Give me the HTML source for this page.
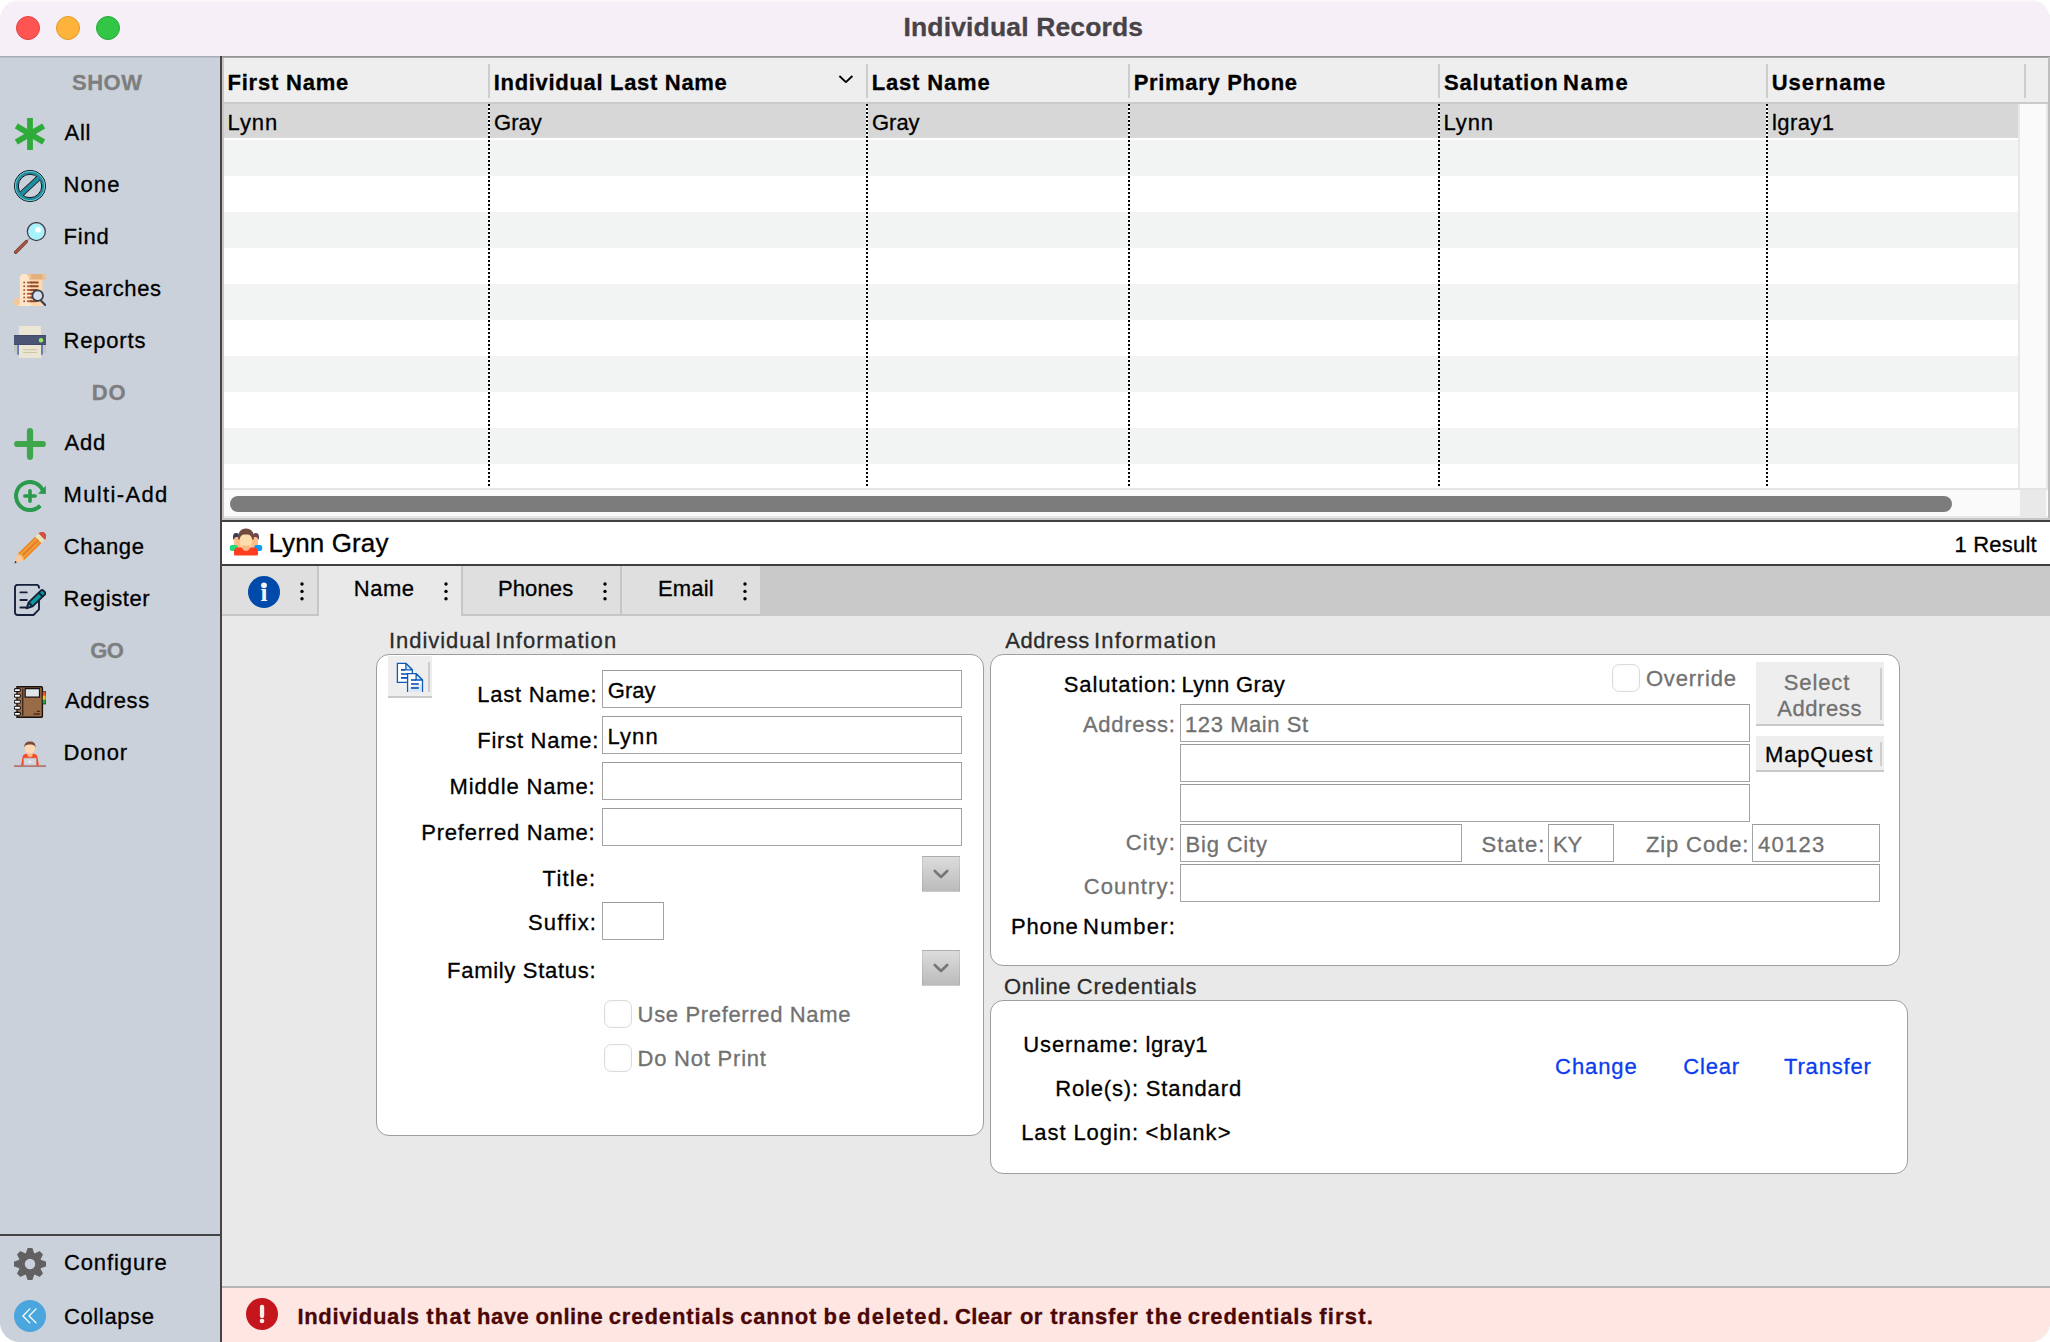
<!DOCTYPE html>
<html lang="en">
<head>
<meta charset="utf-8">
<title>Individual Records</title>
<style>
*{box-sizing:border-box;margin:0;padding:0}
html,body{width:2050px;height:1342px;overflow:hidden;background:#fff}
body{font-family:"Liberation Sans",sans-serif;font-size:22px;color:#000;position:relative}
#win{position:absolute;left:0;top:0;width:2050px;height:1342px;border-radius:20px;overflow:hidden;background:#e9e9e9}
.abs{position:absolute}
.t{position:absolute;white-space:nowrap;line-height:30px;height:30px;-webkit-text-stroke:.3px}
#titlebar{left:0;top:0;width:2050px;height:56px;background:#f6eff7;border-top:2px solid #faf6fa}
.tl{position:absolute;top:16px;width:24px;height:24px;border-radius:50%}
#sidebar{left:0;top:56px;width:220px;height:1286px;background:linear-gradient(#9fa5ae 0,#c3cad4 2px,#cad1db 2px)}
#divider{left:220px;top:56px;width:2px;height:1286px;background:#444}
.ic{position:absolute;left:14px;width:32px;height:32px}
.inp{position:absolute;background:#fff;border:1px solid #a4a4a4;border-top-color:#9a9a9a;height:38px}
.box{position:absolute;background:#fff;border:1px solid #9e9e9e;border-radius:13px}
.cb{position:absolute;width:28px;height:28px;border-radius:7px;background:#fff;border:1px solid #dcdcdc;box-shadow:inset 0 0 3px rgba(0,0,0,.05)}
.dd{position:absolute;width:38px;height:36px;background:linear-gradient(#dcdcdc,#bbbbbb);border:1px solid rgba(0,0,0,.07)}
.btn{position:absolute;background:#eeeeee;border-bottom:2px solid #c9c9c9}
</style>
</head>
<body>
<div id="win">
<div id="titlebar" class="abs"></div>
<div class="tl" style="left:16px;background:#fe5552;border:1px solid #e3413d"></div>
<div class="tl" style="left:56px;background:#feb43a;border:1px solid #e19a2c"></div>
<div class="tl" style="left:96px;background:#32c546;border:1px solid #25aa38"></div>

<div id="sidebar" class="abs"></div>
<div id="divider" class="abs"></div>
<!--SIDEBAR-->
<svg class="ic" style="top:118px" viewBox="0 0 32 32"><g stroke="#2eab38" stroke-width="5.800" stroke-linecap="butt"><path d="M16 0V32"/><path d="M2.300 8.100L29.700 23.900"/><path d="M2.300 23.900L29.700 8.100"/></g></svg>

<svg class="ic" style="top:170px" viewBox="0 0 32 32"><circle cx="16" cy="16" r="13.800" fill="none" stroke="#1b8fa1" stroke-width="3.800"/><circle cx="16" cy="16" r="15.600" fill="none" stroke="#0a1418" stroke-width="1"/><circle cx="16" cy="16" r="14.800" fill="none" stroke="#a4ecee" stroke-width=".7"/><circle cx="16" cy="16" r="11.700" fill="none" stroke="#0a1418" stroke-width="1"/><g transform="rotate(-43 16 16)"><rect x="4.300" y="13.900" width="23.400" height="4.200" fill="#1b8fa1"/><path d="M5 13.600H27M5 18.400H27" stroke="#0a1418" stroke-width="1"/></g></svg>

<svg class="ic" style="top:222px" viewBox="0 0 32 32"><path d="M12.800 19.100L15.400 16.500" stroke="#9aa0aa" stroke-width="1.200"/><path d="M1.700 30.200L12.300 19.600" stroke="#7b3f3a" stroke-width="3.400" stroke-linecap="round"/><path d="M1.900 30L12.100 19.800" stroke="#a8553d" stroke-width="1.800" stroke-linecap="round"/><circle cx="22.350" cy="9.550" r="9" fill="#a7f2fb" stroke="#463a4b" stroke-width="1.300"/><circle cx="24.200" cy="7.800" r="3.300" fill="#fff" opacity=".55"/><circle cx="24.200" cy="7.800" r="2.400" fill="#fff"/></svg>

<svg class="ic" style="top:274px" viewBox="0 0 32 32"><path d="M0 27.500a3.300 3.300 0 0 1 3.300-3.300H8V32H3.300A3.300 3.300 0 0 1 0 28.700z" fill="#f5c896"/><path d="M5.800 4a4 4 0 0 1 4-4H17V32H3.500c1.500-.5 2.300-1.500 2.300-3.500z" fill="#ffe6c8"/><path d="M17 0h11.400V32H17z" fill="#ffd7a8"/><path d="M12 0h17.200a2.800 2.800 0 0 1 0 5.600H15V4a4 4 0 0 0-3-4z" fill="#e2b07e"/><path d="M12 0h5v5.600h-2V4a4 4 0 0 0-3-4z" fill="#f2c696"/><path d="M28.400 0h.8a2.800 2.800 0 0 1 0 5.600h-.8z" fill="#f0c08a"/><g stroke="#b3623f" stroke-width="2" stroke-linecap="round"><path d="M13.800 8.400H17M13.800 12.200H17M13.800 16H17M13.800 19.700H17M13.800 23.500H17M13.800 27.300H17"/></g><g stroke="#8e4a30" stroke-width="2" stroke-linecap="round"><path d="M17 8.400H23.800M17 12.200H23.800M17 16H23M17 19.700H20M17 23.500H20M17 27.300H22"/></g><g fill="#a85a3a"><circle cx="10.200" cy="8.400" r="1"/><circle cx="10.200" cy="12.200" r="1"/><circle cx="10.200" cy="16" r="1"/><circle cx="10.200" cy="19.700" r="1"/><circle cx="10.200" cy="23.500" r="1"/><circle cx="10.200" cy="27.300" r="1"/></g><path d="M27.300 27L31.500 31.200" stroke="#3a3f4a" stroke-width="2.200" stroke-linecap="round"/><circle cx="23.700" cy="21.700" r="5.300" fill="#d5dff0" stroke="#3a3f4a" stroke-width="1.800"/></svg>

<svg class="ic" style="top:326px" viewBox="0 0 32 32"><path d="M5 0h22v10H5z" fill="#ebe6d3"/><path d="M0 18.900h3v7.900H0zM29 18.900h3v7.900h-3z" fill="#c4c6c0"/><path d="M3.200 18.900H5v9.900H3.200zM27 18.900h1.900v9.900H27z" fill="#6878b5"/><path d="M5 18.500h22V32H5z" fill="#ebe6d3"/><path d="M0 9.100h32v9.800H0z" fill="#4a5575"/><path d="M0 9.100h32v1H0zM0 18h32v.9H0z" fill="#3f4a6c"/><circle cx="27" cy="14.300" r="2.200" fill="#98e860"/><path d="M9.100 23.700H22.900M9.100 26.500H22.900" stroke="#cfc5a5" stroke-width="1"/></svg>

<svg class="ic" style="top:428px" viewBox="0 0 32 32"><path d="M16 3.200V28.800M3.200 16H28.800" stroke="#40a64b" stroke-width="6.200" stroke-linecap="round"/></svg>

<svg class="ic" style="top:480px" viewBox="0 0 32 32"><path d="M28.700 10.100A14 14 0 1 0 26.200 25.600" fill="none" stroke="#2a9a4c" stroke-width="4"/><path d="M31.800 5.800L31.900 13.900L24 13.700Z" fill="#2a9a4c"/><path d="M16 10.800V21.200M10.800 16H21.200" stroke="#2a9a4c" stroke-width="3.600" stroke-linecap="round"/></svg>

<svg class="ic" style="top:532px" viewBox="0 0 32 32"><g transform="translate(-.6 .6) rotate(45.500 16 16)"><path d="M11.500 -1v-.5a4.500 4.500 0 0 1 9 0V-1z" fill="#d35045"/><path d="M11.500 -1h9v4.500h-9z" fill="#f5efb5"/><path d="M11.500 .3h9M11.500 2h9" stroke="#cbd0cf" stroke-width=".8"/><path d="M11.500 3.500h9V28l-4.500 -1.500-4.500 1.500z" fill="#f08326"/><path d="M13.500 3.500h5V27.200l-2.500-.8-2.500.8z" fill="#ea8129"/><path d="M13.500 3.500h1V27.400l-1 .4zM17.500 3.500h1V27.800l-1-.4z" fill="#eab949"/><path d="M11.500 27.200l4.500-1.500 4.500 1.500-4.500 9.800z" fill="#ffc896"/><path d="M11.500 27.200l4.500-1.500 4.500 1.500v1l-4.500-1.500-4.500 1.500z" fill="#e8ae2a"/><path d="M14.900 34.600h2.200L16 37.200z" fill="#2a2f3a"/></g></svg>

<svg class="ic" style="top:584px" viewBox="0 0 32 32"><path d="M25 4.500V3.400a2.500 2.500 0 0 0-2.500-2.500h-19a2.500 2.500 0 0 0-2.500 2.500v25.100a2.500 2.500 0 0 0 2.500 2.500h16L25 25.300V15" fill="none" stroke="#16203a" stroke-width="1.900" stroke-linejoin="round"/><path d="M6.400 8.400h6.400M6.400 16h6.400M6.400 23.500h5.500" stroke="#16203a" stroke-width="1.900" stroke-linecap="round"/><g transform="translate(12.600 24.300) rotate(-44)"><path d="M0 0L5.600 -2.800H22.500a1.800 1.800 0 0 1 1.800 1.800V1a1.800 1.800 0 0 1-1.800 1.800H5.600z" fill="#0b9a9b" stroke="#16203a" stroke-width="1.900" stroke-linejoin="round"/><path d="M5.600 -2.800V2.800M19.600 -2.800V2.800" stroke="#16203a" stroke-width="1.900"/></g></svg>

<svg class="ic" style="top:686px" viewBox="0 0 32 32"><path d="M3 .7h24.400a1 1 0 0 1 1 1v28.600a1 1 0 0 1-1 1H3z" fill="#9a6b47" stroke="#17110f" stroke-width="1.400"/><path d="M8.800 2.500v27" stroke="#17110f" stroke-width="1"/><path d="M11.200 2.700h14.300v8.500H11.200z" fill="#e0e6e8" stroke="#17110f" stroke-width="1.200"/><path d="M28.400 5.600h3.600v4.200h-3.600z" fill="#e8562a"/><path d="M28.400 9.800h3.600v4h-3.600z" fill="#f0c030"/><path d="M28.400 13.800h3.600v4.200h-3.600z" fill="#2aa040"/><path d="M28.400 5.600h3.600v12.400h-3.600z" fill="none" stroke="#17110f" stroke-width=".6"/><g fill="#fff" stroke="#17110f" stroke-width="1.100"><rect x=".2" y="2.600" width="6.300" height="2.900" rx="1.450"/><rect x=".2" y="8.300" width="6.300" height="2.900" rx="1.450"/><rect x=".2" y="14.300" width="6.300" height="2.900" rx="1.450"/><rect x=".2" y="20.300" width="6.300" height="2.900" rx="1.450"/><rect x=".2" y="26.400" width="6.300" height="2.900" rx="1.450"/></g><path d="M23 25.300h2.800M19.500 28h6.300" stroke="#17110f" stroke-width="1.100"/></svg>

<svg class="ic" style="top:738px" viewBox="0 0 32 32"><path d="M0 28.100h32" stroke="#b07a75" stroke-width="1.900"/><path d="M7 27.200l1.500-8c.5-2.500 2.500-3.600 7.500-3.600s7 1.100 7.500 3.600l1.500 8z" fill="#f54a28"/><path d="M13.300 13h5.400v3.200a2.700 2.700 0 0 1-5.400 0z" fill="#ffb98a"/><path d="M10.700 8.700c0-3.600 2-5.300 5.300-5.300s5.300 1.700 5.300 5.300c0 4-2.300 6.900-5.300 6.900s-5.300-2.900-5.300-6.900z" fill="#fdd9b5"/><path d="M10.600 9.600c-.6-4.600 1.800-6.200 5.400-6.200s6 1.600 5.400 6.200c-.6-2.300-1.300-3.200-5.400-3.200s-4.800.9-5.400 3.200z" fill="#7a4a3a"/><path d="M9.900 20.200h12.200v6.800H9.900z" fill="#cfd8e0"/><path d="M9.900 20.200h12.200v6.800H9.900z" fill="none" stroke="#b9c4ce" stroke-width=".6"/><rect x="15.200" y="23" width="1.600" height="1.600" fill="#fff"/></svg>

<div class="abs" style="left:0;top:1234px;width:220px;height:2px;background:#444"></div>

<svg class="ic" style="top:1248px" viewBox="0 0 32 32"><g fill="#616161"><circle cx="16" cy="16" r="11.300"/><path d="M11.600 6L13.500 .3a.4 .4 0 0 1 .4-.3h4.200a.4 .4 0 0 1 .4 .3L20.400 6z"/><path transform="rotate(45 16 16)" d="M11.600 6L13.500 .3a.4 .4 0 0 1 .4-.3h4.200a.4 .4 0 0 1 .4 .3L20.400 6z"/><path transform="rotate(90 16 16)" d="M11.600 6L13.500 .3a.4 .4 0 0 1 .4-.3h4.200a.4 .4 0 0 1 .4 .3L20.400 6z"/><path transform="rotate(135 16 16)" d="M11.600 6L13.500 .3a.4 .4 0 0 1 .4-.3h4.200a.4 .4 0 0 1 .4 .3L20.400 6z"/><path transform="rotate(180 16 16)" d="M11.600 6L13.500 .3a.4 .4 0 0 1 .4-.3h4.200a.4 .4 0 0 1 .4 .3L20.400 6z"/><path transform="rotate(225 16 16)" d="M11.600 6L13.500 .3a.4 .4 0 0 1 .4-.3h4.200a.4 .4 0 0 1 .4 .3L20.400 6z"/><path transform="rotate(270 16 16)" d="M11.600 6L13.500 .3a.4 .4 0 0 1 .4-.3h4.200a.4 .4 0 0 1 .4 .3L20.400 6z"/><path transform="rotate(315 16 16)" d="M11.600 6L13.500 .3a.4 .4 0 0 1 .4-.3h4.200a.4 .4 0 0 1 .4 .3L20.400 6z"/></g><circle cx="16" cy="16" r="5.250" fill="#cad1dc"/></svg>

<svg class="ic" style="top:1300px" viewBox="0 0 32 32"><circle cx="16" cy="16" r="16" fill="#4ba6dd"/><path d="M15.800 8.900L8.950 16l6.850 6.900M22.070 8.900L15.060 16l7 6.900" fill="none" stroke="#fff" stroke-width="1.300" stroke-linecap="round" stroke-linejoin="round"/></svg>
<!--/SIDEBAR-->
<!--TABLE-->
<div class="abs" style="left:222px;top:56px;width:1828px;height:466px;background:#fff"></div>
<div class="abs" style="left:222px;top:56px;width:1828px;height:2px;background:linear-gradient(#8c8c8c,#b0b0b0)"></div>
<div class="abs" style="left:222px;top:58px;width:2px;height:462px;background:#c6c6c6"></div>
<div class="abs" style="left:2048px;top:57px;width:2px;height:463px;background:#bebebe"></div>
<div class="abs" style="left:224px;top:58px;width:1824px;height:44px;background:#eeeeee"></div>
<div class="abs" style="left:224px;top:102px;width:1824px;height:2px;background:linear-gradient(#c6c6c6,#cdcdcd)"></div>
<div class="abs" style="left:488px;top:64px;width:2px;height:34px;background:#cdcdcd"></div>
<div class="abs" style="left:866px;top:64px;width:2px;height:34px;background:#cdcdcd"></div>
<div class="abs" style="left:1128px;top:64px;width:2px;height:34px;background:#cdcdcd"></div>
<div class="abs" style="left:1438px;top:64px;width:2px;height:34px;background:#cdcdcd"></div>
<div class="abs" style="left:1766px;top:64px;width:2px;height:34px;background:#cdcdcd"></div>
<div class="abs" style="left:2024px;top:64px;width:2px;height:34px;background:#cdcdcd"></div>
<svg class="abs" style="left:837px;top:73px" width="18" height="12" viewBox="0 0 18 12"><path d="M2.400 3L8.900 9.100L15.400 3" fill="none" stroke="#000" stroke-width="1.900" stroke-linecap="butt" stroke-linejoin="round"/></svg>
<div class="abs" style="left:224px;top:104px;width:1794px;height:34px;background:#d7d7d7"></div>
<div class="abs" style="left:224px;top:140px;width:1794px;height:36px;background:#f2f3f3"></div>
<div class="abs" style="left:224px;top:212px;width:1794px;height:36px;background:#f2f3f3"></div>
<div class="abs" style="left:224px;top:284px;width:1794px;height:36px;background:#f2f3f3"></div>
<div class="abs" style="left:224px;top:356px;width:1794px;height:36px;background:#f2f3f3"></div>
<div class="abs" style="left:224px;top:428px;width:1794px;height:36px;background:#f2f3f3"></div>
<div class="abs" style="left:488px;top:104px;width:2px;height:384px;background:repeating-linear-gradient(#000 0,#000 2px,#fff 2px,#fff 4px)"></div>
<div class="abs" style="left:866px;top:104px;width:2px;height:384px;background:repeating-linear-gradient(#000 0,#000 2px,#fff 2px,#fff 4px)"></div>
<div class="abs" style="left:1128px;top:104px;width:2px;height:384px;background:repeating-linear-gradient(#000 0,#000 2px,#fff 2px,#fff 4px)"></div>
<div class="abs" style="left:1438px;top:104px;width:2px;height:384px;background:repeating-linear-gradient(#000 0,#000 2px,#fff 2px,#fff 4px)"></div>
<div class="abs" style="left:1766px;top:104px;width:2px;height:384px;background:repeating-linear-gradient(#000 0,#000 2px,#fff 2px,#fff 4px)"></div>
<div class="abs" style="left:2018px;top:104px;width:30px;height:384px;background:#fafafa;border-left:2px solid #e8e8e8;border-right:2px solid #e8e8e8"></div>
<div class="abs" style="left:224px;top:488px;width:1824px;height:30px;background:#fafafa;border-top:2px solid #e4e4e4;border-bottom:2px solid #e9e9e9"></div>
<div class="abs" style="left:2020px;top:490px;width:26px;height:26px;background:#e9e9e9"></div>
<div class="abs" style="left:230px;top:496px;width:1722px;height:16px;border-radius:8px;background:#7c7c7c"></div>
<div class="abs" style="left:222px;top:518px;width:1828px;height:2px;background:#c6c6c6"></div>
<div class="abs" style="left:222px;top:520px;width:1828px;height:2px;background:#404040"></div>
<div class="abs" style="left:222px;top:522px;width:1828px;height:42px;background:#fff"></div>
<div class="abs" style="left:222px;top:564px;width:1828px;height:2px;background:#404040"></div>
<!--/TABLE-->
<!--DETAIL-->
<svg class="abs" style="left:229px;top:527px" width="34" height="30" viewBox="-1 -1 34 30"><path d="M3.200 11.500c-.8-4 .3-6.500 2.800-6.500s3 1 3 3v4z" fill="#3b3f5c"/><path d="M28.800 11.500c.8-4-.3-6.500-2.800-6.500s-3 1-3 3v4z" fill="#6a4a50"/><rect x="4.100" y="8.900" width="7.500" height="11" rx="2.500" fill="#ffbe85"/><rect x="20.400" y="8.900" width="7.500" height="11" rx="2.500" fill="#ffbe85"/><rect x="-.2" y="17" width="8" height="6" rx="2.200" fill="#1ede7c"/><rect x="24.200" y="17" width="8" height="6" rx="2.200" fill="#0a9cff"/><path d="M8.200 11.500C7.400 4.500 10.500.4 16 .4s8.600 4.100 7.800 11.100z" fill="#724a40"/><rect x="9.800" y="6.600" width="12.200" height="12.200" rx="4.500" fill="#ffdcab"/><path d="M12 17.500h8v3a4 4 0 0 1-8 0z" fill="#ffb985"/><path d="M4 23.500c0-2.500 1.500-3.900 4-3.900h4c.5 2 2 3.500 4 3.500s3.500-1.500 4-3.500h4c2.500 0 4 1.400 4 3.900v2.400c0 1-.6 1.500-1.500 1.500h-21c-.9 0-1.500-.5-1.500-1.500z" fill="#ff3d1f"/></svg>

<div class="abs" style="left:222px;top:566px;width:1828px;height:50px;background:#c9c9c9"></div>
<div class="abs" style="left:222px;top:566px;width:97px;height:50px;background:#dfdfdf;border-right:2px solid #c6c6c6;border-bottom:2px solid #c6c6c6"></div>
<div class="abs" style="left:319px;top:566px;width:142px;height:50px;background:#e9e9e9"></div>
<div class="abs" style="left:461px;top:566px;width:160px;height:50px;background:#dfdfdf;border-left:2px solid #c6c6c6;border-bottom:2px solid #c6c6c6"></div>
<div class="abs" style="left:620px;top:566px;width:140px;height:50px;background:#dfdfdf;border-left:2px solid #c6c6c6;border-bottom:2px solid #c6c6c6"></div>
<svg class="abs" style="left:248px;top:576px" width="32" height="32" viewBox="0 0 32 32"><circle cx="16" cy="16" r="16" fill="#004aac"/><circle cx="16" cy="9.300" r="2.900" fill="#f4f4f4"/><text x="16" y="25.200" text-anchor="middle" font-family="Liberation Serif,serif" font-weight="bold" font-size="25" fill="#f4f4f4">i</text></svg>
<svg class="abs" style="left:298px;top:580px" width="8" height="24" viewBox="0 0 8 24"><circle cx="4" cy="4" r="1.700"/><circle cx="4" cy="11.400" r="1.700"/><circle cx="4" cy="18.700" r="1.700"/></svg>
<svg class="abs" style="left:442px;top:580px" width="8" height="24" viewBox="0 0 8 24"><circle cx="4" cy="4" r="1.700"/><circle cx="4" cy="11.400" r="1.700"/><circle cx="4" cy="18.700" r="1.700"/></svg>
<svg class="abs" style="left:601px;top:580px" width="8" height="24" viewBox="0 0 8 24"><circle cx="4" cy="4" r="1.700"/><circle cx="4" cy="11.400" r="1.700"/><circle cx="4" cy="18.700" r="1.700"/></svg>
<svg class="abs" style="left:741px;top:580px" width="8" height="24" viewBox="0 0 8 24"><circle cx="4" cy="4" r="1.700"/><circle cx="4" cy="11.400" r="1.700"/><circle cx="4" cy="18.700" r="1.700"/></svg>

<div class="box" style="left:376px;top:654px;width:608px;height:482px"></div>
<div class="btn" style="left:388px;top:656px;width:44px;height:42px"></div>
<div class="abs" style="left:428px;top:662px;width:2px;height:30px;background:#cdcdcd"></div>
<svg class="abs" style="left:396px;top:662px" width="28" height="30" viewBox="0 0 28 30"><path d="M1.400 1.400h8.500l6.400 6.400V20.300H1.400z" fill="#fff" stroke="#0a5cb8" stroke-width="1.300"/><path d="M9.900 1.400V7.800h6.400z" fill="#d4e5f9" stroke="#0a5cb8" stroke-width="1.300" stroke-linejoin="round"/><path d="M5 7.900h4.500M5 12h6M5 15.900h6" stroke="#0050b8" stroke-width="1.700"/><path d="M11.600 30V11.600h8.500l6.400 6.400V30" fill="#fff"/><path d="M13 30l.3-5 12.300-3V30z" fill="#d9e8fb"/><path d="M11.600 30V11.600h8.500l6.400 6.400V30" fill="none" stroke="#0a5cb8" stroke-width="1.300"/><path d="M20.100 11.600V18h6.400z" fill="#d4e5f9" stroke="#0a5cb8" stroke-width="1.300" stroke-linejoin="round"/><path d="M15 18h5M15 22h7.800M15 26h7.800" stroke="#0046ac" stroke-width="1.700"/></svg>

<div class="inp" style="left:602px;top:670px;width:360px"></div>
<div class="inp" style="left:602px;top:716px;width:360px"></div>
<div class="inp" style="left:602px;top:762px;width:360px"></div>
<div class="inp" style="left:602px;top:808px;width:360px"></div>
<div class="inp" style="left:602px;top:902px;width:62px"></div>
<div class="dd" style="left:922px;top:856px"></div>
<div class="dd" style="left:922px;top:950px"></div>
<svg class="abs" style="left:932px;top:868px" width="18" height="12" viewBox="0 0 18 12"><path d="M2.800 3l6.200 6 6.200-6" fill="none" stroke="#767676" stroke-width="2.600" stroke-linecap="round" stroke-linejoin="round"/></svg>
<svg class="abs" style="left:932px;top:962px" width="18" height="12" viewBox="0 0 18 12"><path d="M2.800 3l6.200 6 6.200-6" fill="none" stroke="#767676" stroke-width="2.600" stroke-linecap="round" stroke-linejoin="round"/></svg>
<div class="cb" style="left:604px;top:1000px"></div>
<div class="cb" style="left:604px;top:1044px"></div>

<div class="box" style="left:990px;top:654px;width:910px;height:312px"></div>
<div class="inp" style="left:1180px;top:704px;width:570px"></div>
<div class="inp" style="left:1180px;top:744px;width:570px"></div>
<div class="inp" style="left:1180px;top:784px;width:570px"></div>
<div class="inp" style="left:1180px;top:824px;width:282px"></div>
<div class="inp" style="left:1548px;top:824px;width:66px"></div>
<div class="inp" style="left:1752px;top:824px;width:128px"></div>
<div class="inp" style="left:1180px;top:864px;width:700px"></div>
<div class="cb" style="left:1612px;top:664px"></div>
<div class="btn" style="left:1756px;top:662px;width:128px;height:64px"></div>
<div class="abs" style="left:1880px;top:668px;width:2px;height:52px;background:#cfcfcf"></div>
<div class="btn" style="left:1756px;top:736px;width:128px;height:36px"></div>
<div class="abs" style="left:1880px;top:742px;width:2px;height:24px;background:#cfcfcf"></div>

<div class="box" style="left:990px;top:1000px;width:918px;height:174px"></div>

<div class="abs" style="left:222px;top:1286px;width:1828px;height:2px;background:#b4b4b4"></div>
<div class="abs" style="left:222px;top:1288px;width:1828px;height:54px;background:#fee6e2"></div>
<svg class="abs" style="left:246px;top:1298px" width="32" height="32" viewBox="0 0 32 32"><circle cx="16" cy="16" r="16" fill="#c4161c"/><rect x="13.900" y="6.800" width="4.300" height="13.400" rx="2.100" fill="#fdeceb"/><circle cx="16" cy="23" r="2.300" fill="#fdeceb"/></svg>
<!--/DETAIL-->
<div class="t" id="t0" style="left:903.53px;top:12px;font-size:26.5px;font-weight:bold;color:#474347;letter-spacing:0.146px;">Individual Records</div>
<div class="t" id="t1" style="left:71.97px;top:68px;font-weight:bold;color:#7e7e7e;letter-spacing:0.501px;">SHOW</div>
<div class="t" id="t2" style="left:64.56px;top:118px;letter-spacing:0.681px;">All</div>
<div class="t" id="t3" style="left:63.50px;top:170px;letter-spacing:1.096px;">None</div>
<div class="t" id="t4" style="left:63.50px;top:222px;letter-spacing:0.809px;">Find</div>
<div class="t" id="t5" style="left:63.80px;top:274px;letter-spacing:0.606px;">Searches</div>
<div class="t" id="t6" style="left:63.50px;top:326px;letter-spacing:0.809px;">Reports</div>
<div class="t" id="t7" style="left:91.73px;top:378px;font-weight:bold;color:#7e7e7e;letter-spacing:0.896px;">DO</div>
<div class="t" id="t8" style="left:64.56px;top:428px;letter-spacing:0.802px;">Add</div>
<div class="t" id="t9" style="left:63.50px;top:480px;letter-spacing:1.350px;">Multi-Add</div>
<div class="t" id="t10" style="left:63.68px;top:532px;letter-spacing:0.643px;">Change</div>
<div class="t" id="t11" style="left:63.50px;top:584px;letter-spacing:0.607px;">Register</div>
<div class="t" id="t12" style="left:90.30px;top:636px;font-weight:bold;color:#7e7e7e;letter-spacing:-0.708px;">GO</div>
<div class="t" id="t13" style="left:64.96px;top:686px;letter-spacing:0.587px;">Address</div>
<div class="t" id="t14" style="left:63.50px;top:738px;letter-spacing:0.937px;">Donor</div>
<div class="t" id="t15" style="left:63.88px;top:1248px;letter-spacing:0.926px;">Configure</div>
<div class="t" id="t16" style="left:63.88px;top:1302px;letter-spacing:0.655px;">Collapse</div>
<div class="t" id="t17" style="left:227.43px;top:68px;font-weight:bold;letter-spacing:0.801px;">First Name</div>
<div class="t" id="t18" style="left:493.73px;top:68px;font-weight:bold;letter-spacing:0.687px;">Individual Last Name</div>
<div class="t" id="t19" style="left:871.63px;top:68px;font-weight:bold;letter-spacing:0.855px;">Last Name</div>
<div class="t" id="t20" style="left:1133.73px;top:68px;font-weight:bold;letter-spacing:0.670px;">Primary Phone</div>
<div class="t" id="t23" style="left:1771.68px;top:68px;font-weight:bold;letter-spacing:1.040px;">Username</div>
<div class="t" id="t24" style="left:227.60px;top:108px;letter-spacing:0.914px;">Lynn</div>
<div class="t" id="t25" style="left:494.09px;top:108px;letter-spacing:-0.013px;">Gray</div>
<div class="t" id="t26" style="left:871.99px;top:108px;letter-spacing:-0.013px;">Gray</div>
<div class="t" id="t27" style="left:1443.40px;top:108px;letter-spacing:0.914px;">Lynn</div>
<div class="t" id="t28" style="left:1772.02px;top:108px;letter-spacing:0.387px;">lgray1</div>
<div class="t" id="t29" style="left:268.47px;top:528px;font-size:26px;letter-spacing:0.125px;">Lynn Gray</div>
<div class="t" id="t30" style="left:1954.42px;top:530px;letter-spacing:0.231px;">1 Result</div>
<div class="t" id="t31" style="left:353.80px;top:574px;letter-spacing:0.498px;">Name</div>
<div class="t" id="t32" style="left:497.90px;top:574px;letter-spacing:0.135px;">Phones</div>
<div class="t" id="t33" style="left:657.90px;top:574px;letter-spacing:0.190px;">Email</div>
<div class="t" id="t36" style="left:477.30px;top:680px;letter-spacing:0.746px;">Last Name:</div>
<div class="t" id="t37" style="left:477.30px;top:726px;letter-spacing:0.733px;">First Name:</div>
<div class="t" id="t38" style="left:449.60px;top:772px;letter-spacing:0.854px;">Middle Name:</div>
<div class="t" id="t39" style="left:421.30px;top:818px;letter-spacing:0.771px;">Preferred Name:</div>
<div class="t" id="t40" style="left:542.61px;top:864px;letter-spacing:1.149px;">Title:</div>
<div class="t" id="t41" style="left:527.90px;top:908px;letter-spacing:1.226px;">Suffix:</div>
<div class="t" id="t42" style="left:447.10px;top:956px;letter-spacing:0.695px;">Family Status:</div>
<div class="t" id="t43" style="left:607.69px;top:676px;letter-spacing:0.087px;">Gray</div>
<div class="t" id="t44" style="left:607.50px;top:722px;letter-spacing:1.081px;">Lynn</div>
<div class="t" id="t45" style="left:637.60px;top:1000px;color:#717171;letter-spacing:0.654px;">Use Preferred Name</div>
<div class="t" id="t46" style="left:637.50px;top:1044px;color:#717171;letter-spacing:0.785px;">Do Not Print</div>
<div class="t" id="t49" style="left:1063.80px;top:670px;letter-spacing:0.844px;">Salutation:</div>
<div class="t" id="t50" style="left:1181.40px;top:670px;letter-spacing:0.345px;">Lynn Gray</div>
<div class="t" id="t51" style="left:1082.96px;top:710px;color:#717171;letter-spacing:0.718px;">Address:</div>
<div class="t" id="t52" style="left:1185.02px;top:710px;color:#717171;letter-spacing:0.573px;">123 Main St</div>
<div class="t" id="t53" style="left:1125.68px;top:828px;color:#717171;letter-spacing:1.281px;">City:</div>
<div class="t" id="t54" style="left:1185.50px;top:830px;color:#717171;letter-spacing:0.807px;">Big City</div>
<div class="t" id="t55" style="left:1481.60px;top:830px;color:#717171;letter-spacing:1.045px;">State:</div>
<div class="t" id="t56" style="left:1553.00px;top:830px;color:#717171;letter-spacing:-0.071px;">KY</div>
<div class="t" id="t57" style="left:1645.90px;top:830px;color:#717171;letter-spacing:0.890px;">Zip Code:</div>
<div class="t" id="t58" style="left:1758.00px;top:830px;color:#717171;letter-spacing:1.271px;">40123</div>
<div class="t" id="t59" style="left:1083.68px;top:872px;color:#717171;letter-spacing:1.139px;">Country:</div>
<div class="t" id="t62" style="left:1645.96px;top:664px;color:#717171;letter-spacing:0.809px;">Override</div>
<div class="t" id="t63" style="left:1783.80px;top:668px;color:#717171;letter-spacing:0.881px;">Select</div>
<div class="t" id="t64" style="left:1777.16px;top:694px;color:#717171;letter-spacing:0.587px;">Address</div>
<div class="t" id="t65" style="left:1765.00px;top:740px;letter-spacing:0.838px;">MapQuest</div>
<div class="t" id="t68" style="left:1023.30px;top:1030px;letter-spacing:0.889px;">Username:</div>
<div class="t" id="t69" style="left:1055.30px;top:1074px;letter-spacing:0.814px;">Role(s):</div>
<div class="t" id="t70" style="left:1021.20px;top:1118px;letter-spacing:0.917px;">Last Login:</div>
<div class="t" id="t71" style="left:1145.62px;top:1030px;letter-spacing:0.407px;">lgray1</div>
<div class="t" id="t72" style="left:1145.70px;top:1074px;letter-spacing:0.889px;">Standard</div>
<div class="t" id="t73" style="left:1145.62px;top:1118px;letter-spacing:1.110px;">&lt;blank&gt;</div>
<div class="t" id="t74" style="left:1555.08px;top:1052px;color:#0b3cf0;letter-spacing:0.923px;">Change</div>
<div class="t" id="t75" style="left:1683.18px;top:1052px;color:#0b3cf0;letter-spacing:0.851px;">Clear</div>
<div class="t" id="t76" style="left:1784.01px;top:1052px;color:#0b3cf0;letter-spacing:0.824px;">Transfer</div>
<div class="abs" id="g_sn" style="left:0;top:0"><span class="t" id="t21" style="left:1444.07px;top:68px;font-weight:bold;letter-spacing:0.806px;">Salutation</span> <span class="t" id="t22" style="left:1563.03px;top:68px;font-weight:bold;letter-spacing:1.634px;">Name</span></div>
<div class="abs" id="g_ii" style="left:0;top:0"><span class="t" id="t34" style="left:389.07px;top:626px;color:#2b2b2b;letter-spacing:0.928px;">Individual</span> <span class="t" id="t35" style="left:495.27px;top:626px;color:#2b2b2b;letter-spacing:1.080px;">Information</span></div>
<div class="abs" id="g_ai" style="left:0;top:0"><span class="t" id="t47" style="left:1005.16px;top:626px;color:#2b2b2b;letter-spacing:0.553px;">Address</span> <span class="t" id="t48" style="left:1094.07px;top:626px;color:#2b2b2b;letter-spacing:1.180px;">Information</span></div>
<div class="abs" id="g_pn" style="left:0;top:0"><span class="t" id="t60" style="left:1011.10px;top:912px;letter-spacing:0.739px;">Phone</span> <span class="t" id="t61" style="left:1083.00px;top:912px;letter-spacing:1.242px;">Number:</span></div>
<div class="abs" id="g_oc" style="left:0;top:0"><span class="t" id="t66" style="left:1004.06px;top:972px;color:#2b2b2b;letter-spacing:0.565px;">Online</span> <span class="t" id="t67" style="left:1076.68px;top:972px;color:#2b2b2b;letter-spacing:0.843px;">Credentials</span></div>
<div class="abs" id="g_err" style="left:0;top:0"><span class="t" id="t77" style="left:297.53px;top:1302px;font-weight:bold;color:#4b0606;letter-spacing:0.645px;">Individuals</span> <span class="t" id="t78" style="left:426.33px;top:1302px;font-weight:bold;color:#4b0606;letter-spacing:1.203px;">that</span> <span class="t" id="t79" style="left:477.06px;top:1302px;font-weight:bold;color:#4b0606;letter-spacing:0.511px;">have</span> <span class="t" id="t80" style="left:535.54px;top:1302px;font-weight:bold;color:#4b0606;letter-spacing:0.486px;">online</span> <span class="t" id="t81" style="left:608.74px;top:1302px;font-weight:bold;color:#4b0606;letter-spacing:0.899px;">credentials</span> <span class="t" id="t82" style="left:740.34px;top:1302px;font-weight:bold;color:#4b0606;letter-spacing:0.761px;">cannot</span> <span class="t" id="t83" style="left:823.55px;top:1302px;font-weight:bold;color:#4b0606;letter-spacing:1.515px;">be</span> <span class="t" id="t84" style="left:857.10px;top:1302px;font-weight:bold;color:#4b0606;letter-spacing:1.182px;">deleted.</span> <span class="t" id="t85" style="left:954.90px;top:1302px;font-weight:bold;color:#4b0606;letter-spacing:0.422px;">Clear</span> <span class="t" id="t86" style="left:1019.94px;top:1302px;font-weight:bold;color:#4b0606;letter-spacing:0.392px;">or</span> <span class="t" id="t87" style="left:1050.13px;top:1302px;font-weight:bold;color:#4b0606;letter-spacing:0.826px;">transfer</span> <span class="t" id="t88" style="left:1146.03px;top:1302px;font-weight:bold;color:#4b0606;letter-spacing:1.360px;">the</span> <span class="t" id="t89" style="left:1187.84px;top:1302px;font-weight:bold;color:#4b0606;letter-spacing:0.849px;">credentials</span> <span class="t" id="t90" style="left:1319.32px;top:1302px;font-weight:bold;color:#4b0606;letter-spacing:1.161px;">first.</span></div>
</div>
</body>
</html>
